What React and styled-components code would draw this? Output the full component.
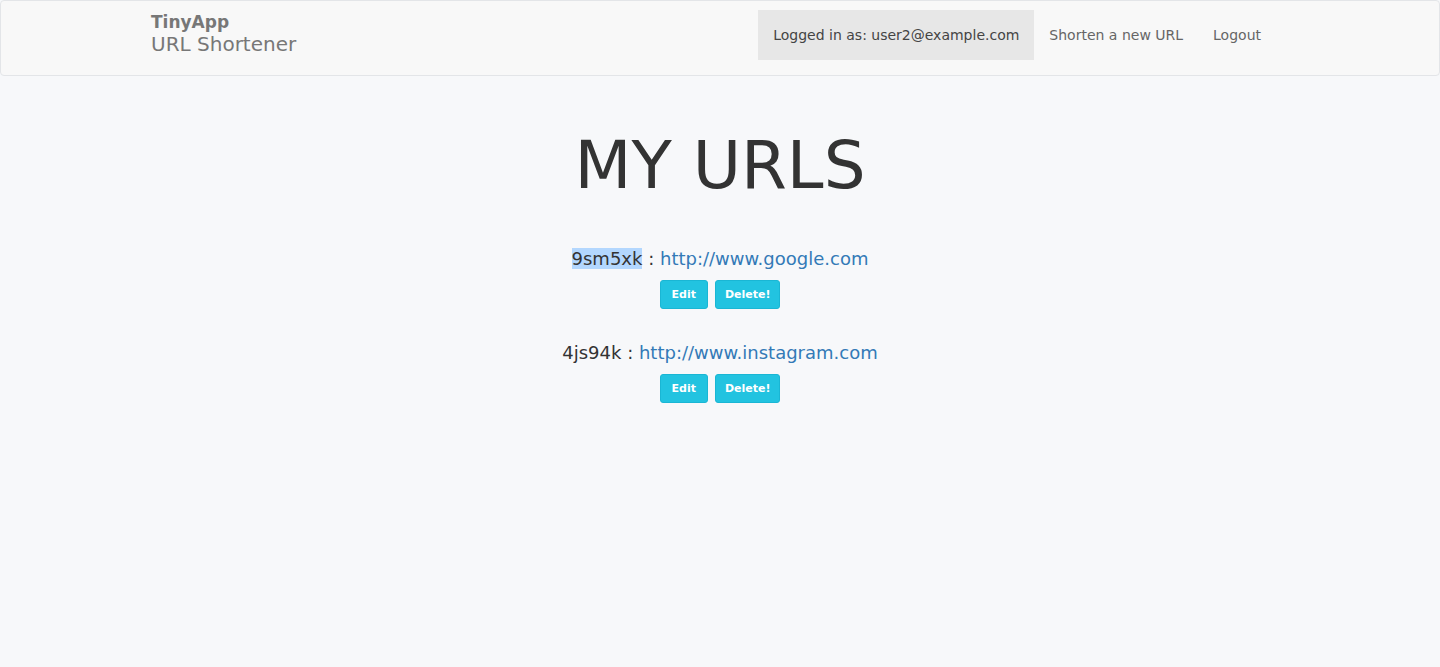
import React from 'react';
import styled, { createGlobalStyle } from 'styled-components';

const GlobalStyle = createGlobalStyle`
  body {
    margin: 0;
    background: #f7f8fa;
    font-family: 'DejaVu Sans', 'Open Sans', sans-serif;
    color: #333;
  }
`;

const Navbar = styled.nav`
  height: 74px;
  border: 1px solid #e3e5e8;
  border-radius: 4px;
  background: #f8f8f8;
  display: flex;
  justify-content: space-between;
  align-items: flex-start;
  padding: 0 150px;
`;

const Brand = styled.div`
  padding-top: 11px;
  color: #777;
  line-height: 1.2;
`;

const BrandName = styled.div`
  font-size: 17px;
  font-weight: 700;
`;

const BrandSub = styled.div`
  font-size: 20px;
`;

const NavList = styled.ul`
  display: flex;
  list-style: none;
  margin: 9px 13px 0 0;
  padding: 0;
`;

const NavItem = styled.li`
  height: 50px;
  display: flex;
  align-items: center;
  padding: 0 15px;
  font-size: 14px;
  color: ${p => (p.$active ? '#444' : '#666')};
  background: ${p => (p.$active ? '#e7e7e7' : 'transparent')};
  padding-bottom: ${p => (p.$active ? '0' : '2px')};
`;

const Main = styled.main`
  display: flex;
  flex-direction: column;
  align-items: center;
`;

const Title = styled.h1`
  margin: 51px 0 42px;
  font-size: 66px;
  font-weight: 400;
  color: #333;
`;

const UrlRow = styled.div`
  display: flex;
  flex-direction: column;
  align-items: center;
  margin-bottom: 31px;
`;

const UrlLine = styled.div`
  font-size: 18px;
  line-height: 26px;
`;

const ShortCode = styled.span`
  background: ${p => (p.$selected ? '#b3d7fe' : 'transparent')};
`;

const LongUrl = styled.a`
  color: #337ab7;
  text-decoration: none;
`;

const Buttons = styled.div`
  display: flex;
  gap: 7px;
  margin-top: 8px;
`;

const Button = styled.button`
  box-sizing: border-box;
  height: 29px;
  padding: 0 ${p => p.$pad}px;
  border: 1px solid #1ab6d4;
  border-radius: 3px;
  background: #22c3e0;
  color: #fff;
  font-family: inherit;
  font-size: 11px;
  font-weight: 700;
`;

const urls = [
  { id: '9sm5xk', long: 'http://www.google.com', selected: true },
  { id: '4js94k', long: 'http://www.instagram.com' },
];

export default function App() {
  return (
    <>
      <GlobalStyle />
      <Navbar>
        <Brand>
          <BrandName>TinyApp</BrandName>
          <BrandSub>URL Shortener</BrandSub>
        </Brand>
        <NavList>
          <NavItem $active>Logged in as: user2@example.com</NavItem>
          <NavItem>Shorten a new URL</NavItem>
          <NavItem>Logout</NavItem>
        </NavList>
      </Navbar>
      <Main>
        <Title>MY URLS</Title>
        {urls.map(u => (
          <UrlRow key={u.id}>
            <UrlLine>
              <ShortCode $selected={u.selected}>{u.id}</ShortCode> :{' '}
              <LongUrl href="#">{u.long}</LongUrl>
            </UrlLine>
            <Buttons>
              <Button $pad={11}>Edit</Button>
              <Button $pad={9}>Delete!</Button>
            </Buttons>
          </UrlRow>
        ))}
      </Main>
    </>
  );
}
